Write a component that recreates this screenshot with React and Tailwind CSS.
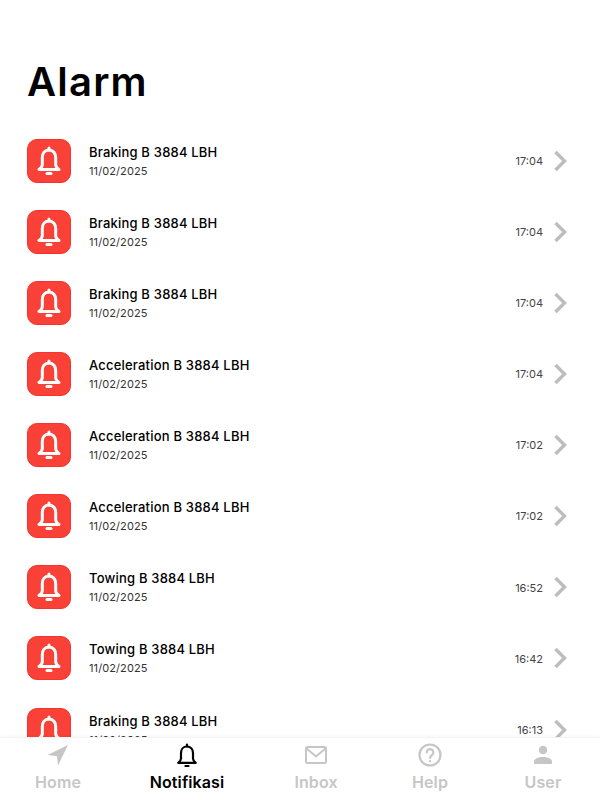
const alarms = [
  { title: 'Braking B 3884 LBH', time: '17:04' },
  { title: 'Braking B 3884 LBH', time: '17:04' },
  { title: 'Braking B 3884 LBH', time: '17:04' },
  { title: 'Acceleration B 3884 LBH', time: '17:04' },
  { title: 'Acceleration B 3884 LBH', time: '17:02' },
  { title: 'Acceleration B 3884 LBH', time: '17:02' },
  { title: 'Towing B 3884 LBH', time: '16:52' },
  { title: 'Towing B 3884 LBH', time: '16:42' },
  { title: 'Braking B 3884 LBH', time: '16:13' },
]

function BellIcon({ className }) {
  return (
    <svg viewBox="0 0 24 30" className={className} fill="none" stroke="currentColor" strokeWidth="3" strokeLinejoin="round" strokeLinecap="round">
      <path d="M12 4c-4.300 0-6.700 3.300-6.700 7.600v7.200c0 2-1.100 3.200-3.300 4.700h20c-2.200-1.500-3.300-2.700-3.300-4.700v-7.200C18.700 7.300 16.300 4 12 4z" />
      <path d="M12 2v2" />
      <path d="M10 27.500h4" />
    </svg>
  )
}

function AlarmRow({ title, time }) {
  return (
    <div className="flex items-center h-[71.125px] shrink-0 pl-[27px] pr-[33px]">
      <div className="w-[44px] h-[44px] rounded-[10px] bg-[#f94137] border border-[#f5352b] flex items-center justify-center text-white">
        <BellIcon className="w-[24px] h-[30px]" />
      </div>
      <div className="ml-[18px] flex-1 pt-[1px]">
        <p className="text-[13px] leading-[18px] font-medium tracking-[0.2px] text-black">{title}</p>
        <p className="text-[11px] leading-[18px] mt-[1px] tracking-[0.1px] text-[#333333]">11/02/2025</p>
      </div>
      <span className="text-[11px] pt-[1px] text-[#444444]">{time}</span>
      <svg viewBox="0 0 14 22" className="w-[14px] h-[22px] ml-[10px] text-[#bdbdbd]" fill="none" stroke="currentColor" strokeWidth="3.4">
        <path d="M2.500 2 11.500 11 2.500 20" />
      </svg>
    </div>
  )
}

function NavItem({ label, active, children }) {
  return (
    <div className={`flex flex-col items-center ${active ? 'text-black' : 'text-[#c6c6c6]'}`}>
      <div className="h-[26px] flex items-center justify-center">{children}</div>
      <span className="text-[16px] leading-[22px] font-semibold tracking-[0.1px] mt-[3px]">{label}</span>
    </div>
  )
}

export default function App() {
  return (
    <div className="h-[800px] w-[600px] bg-white flex flex-col overflow-hidden font-['Inter',sans-serif]">
      <h1 className="text-[40px] leading-[46px] font-semibold tracking-[1.2px] text-black pl-[27px] pt-[59px] pb-[20px]">Alarm</h1>

      <div className="flex-1 overflow-hidden">
        {alarms.map((a, i) => (
          <AlarmRow key={i} title={a.title} time={a.time} />
        ))}
      </div>

      <nav className="h-[63px] shrink-0 bg-white border-t border-[#f4f4f4] shadow-[0_-1px_3px_rgba(0,0,0,0.03)] grid grid-cols-[116px_142px_116px_112px_114px] pt-[4px]">
        <NavItem label="Home">
          <svg viewBox="0 0 22 22" className="w-[22px] h-[22px]" fill="currentColor">
            <path d="M21 1 .5 11l9.500 1.200L11 21.500z" />
          </svg>
        </NavItem>
        <NavItem label="Notifikasi" active>
          <svg viewBox="0 0 22 24" className="w-[22px] h-[24px]" fill="none" stroke="currentColor" strokeWidth="2.2" strokeLinejoin="round" strokeLinecap="round">
            <path d="M11 3.500c-3.800 0-6 2.900-6 6.500v5.500c0 1.800-.9 2.900-2.800 4.300h17.600c-1.900-1.400-2.800-2.500-2.800-4.300V10c0-3.600-2.200-6.500-6-6.500z" />
            <path d="M11 1.500v2" />
            <path d="M9.500 23h3" />
          </svg>
        </NavItem>
        <NavItem label="Inbox">
          <svg viewBox="0 0 22 18" className="w-[22px] h-[18px]" fill="none" stroke="currentColor" strokeWidth="2">
            <rect x="1" y="1" width="20" height="16" rx="1.500" />
            <path d="m1.500 2.500 9.500 8 9.500-8" />
          </svg>
        </NavItem>
        <NavItem label="Help">
          <svg viewBox="0 0 24 24" className="w-[24px] h-[24px]" fill="none" stroke="currentColor" strokeWidth="2.200" strokeLinecap="round">
            <circle cx="12" cy="12" r="10.500" />
            <path d="M8.800 9.400a3.300 3.300 0 1 1 5 2.800c-1.200.8-1.800 1.400-1.800 2.800" />
            <path d="M12 18.200v.1" />
          </svg>
        </NavItem>
        <NavItem label="User">
          <svg viewBox="0 0 20 20" className="w-[20px] h-[20px]" fill="currentColor">
            <circle cx="10" cy="5" r="4.300" />
            <path d="M1 17c0-3.500 4-5 9-5s9 1.500 9 5v1c0 .6-.4 1-1 1H2c-.6 0-1-.4-1-1z" />
          </svg>
        </NavItem>
      </nav>
    </div>
  )
}
